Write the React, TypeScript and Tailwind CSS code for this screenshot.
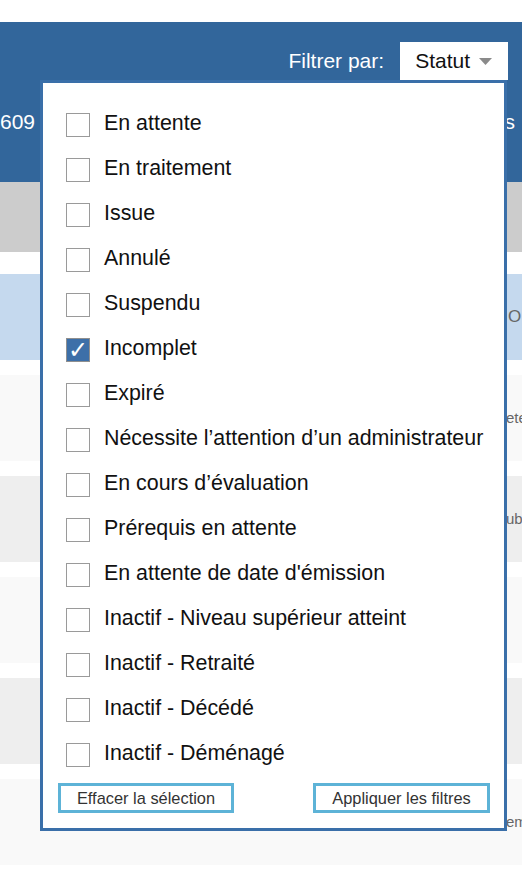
import React from 'react'

const statuses = [
  'En attente',
  'En traitement',
  'Issue',
  'Annulé',
  'Suspendu',
  'Incomplet',
  'Expiré',
  'Nécessite l’attention d’un administrateur',
  'En cours d’évaluation',
  'Prérequis en attente',
  "En attente de date d'émission",
  'Inactif - Niveau supérieur atteint',
  'Inactif - Retraité',
  'Inactif - Décédé',
  'Inactif - Déménagé',
]

const rows = [
  { bg: 'bg-[#f9f9f9]', text: 'ete' },
  { bg: 'bg-[#eeeeee]', text: 'ub' },
  { bg: 'bg-[#f9f9f9]', text: '' },
  { bg: 'bg-[#eeeeee]', text: '' },
  { bg: 'bg-[#f9f9f9]', text: 'em' },
]

const App = () => {
  const checked = 'Incomplet'

  return (
    <div className="relative w-[522px] h-[876px] overflow-hidden bg-white font-['Liberation_Sans',Arial,sans-serif]">
      {/* Page behind the dropdown */}
      <div className="h-[22px]" />
      <div className="h-[160px] bg-[#32669b]">
        <div className="flex justify-end items-center pt-[20px] pr-[14px]">
          <span className="text-[21px] text-white mr-[16px]">Filtrer par:</span>
          <div className="relative z-20 h-[38px] bg-white flex items-center pl-[15px] pr-[16px]">
            <span className="text-[21px] text-[#111]">Statut</span>
            <svg width="13" height="7" viewBox="0 0 13 7" className="ml-[9px] mt-[1px]">
              <polygon points="0,0 13,0 6.5,7" fill="#8a8a8a" />
            </svg>
          </div>
        </div>
        <div className="mt-[30px] h-6 leading-6 flex justify-between text-[21px] text-white">
          <span>609</span>
          <span className="pr-[7px]">Actions</span>
        </div>
      </div>
      <div className="h-[70px] bg-[#cccccc]" />
      <div className="h-[22px]" />
      <div className="h-[86px] bg-[#c5d9ee] flex items-center pl-[508px] text-[17px] text-[#666] whitespace-nowrap">
        O
      </div>
      {rows.map((r, i) => (
        <div key={i} className={`mt-[15px] h-[86px] ${r.bg} flex items-center pl-[506px] text-[15px] text-[#666] whitespace-nowrap`}>
          {r.text}
        </div>
      ))}

      {/* Dropdown panel */}
      <div className="absolute z-10 left-[40px] top-[80px] w-[467px] h-[751px] border-[3px] border-[#3a6fa9] bg-white flex flex-col">
        <div className="pt-[19px]">
          {statuses.map(s => (
            <div key={s} className="h-[45px] flex items-center pl-[23px]">
              {s === checked ? (
                <div className="w-[24px] h-[24px] border border-[#8f8f8f] bg-[#3d6fa8] flex items-center justify-center">
                  <span className="text-white text-[24px] leading-none font-['DejaVu_Sans',sans-serif] font-bold">✓</span>
                </div>
              ) : (
                <div className="w-[24px] h-[24px] border border-[#9a9a9a] bg-white" />
              )}
              <span className="ml-[14px] pb-[3px] text-[21.4px] leading-6 text-[#111] whitespace-nowrap">{s}</span>
            </div>
          ))}
        </div>
        <div className="mt-[6px] flex justify-between pl-[15px] pr-[14px]">
          <button className="w-[176px] h-[30px] border-[3px] border-[#5db3d7] bg-white text-[16.4px] text-[#333] whitespace-nowrap">
            Effacer la sélection
          </button>
          <button className="w-[177px] h-[30px] border-[3px] border-[#5db3d7] bg-white text-[16.4px] text-[#333] whitespace-nowrap">
            Appliquer les filtres
          </button>
        </div>
      </div>
    </div>
  )
}

export default App
